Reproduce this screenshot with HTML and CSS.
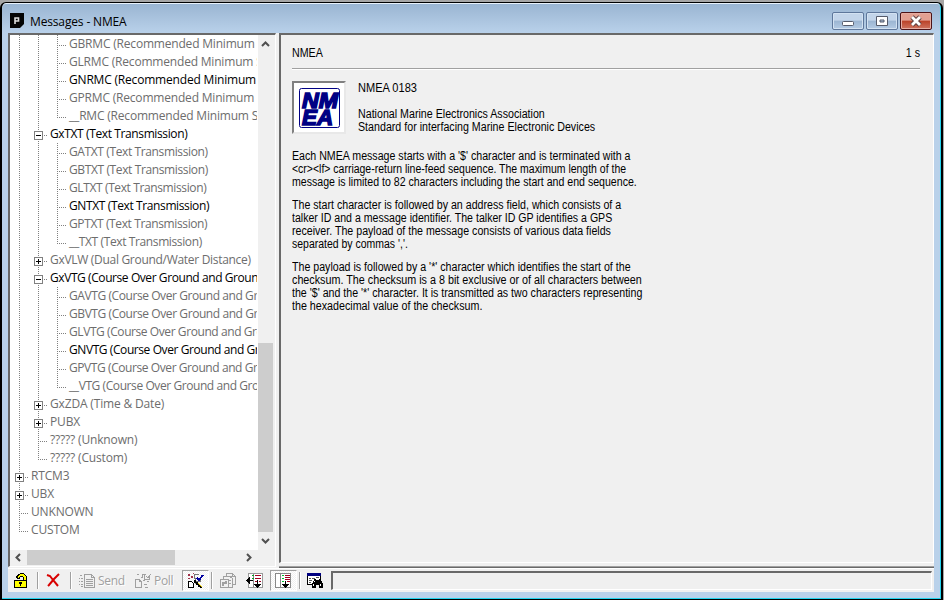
FILE: index.html
```html
<!DOCTYPE html>
<html lang="en">
<head>
<meta charset="utf-8">
<title>Messages - NMEA</title>
<link rel="stylesheet" href="styles.css">
</head>
<body>
<div class="window">
  <header class="titlebar">
    <svg class="app" width="14" height="15" viewBox="0 0 14 15"><path d="M0 0h14v11l-4 4H0z" fill="#050505"/><path d="M5 11V5h3.500v3H5" fill="none" stroke="#ddd" stroke-width="1.600"/></svg>
    <h1>Messages - NMEA</h1>
    <div class="controls">
      <button class="ctl"><svg width="12" height="12"><rect x=".5" y="6.500" width="11" height="4" rx="1" fill="#fff" stroke="#555b6b"/></svg></button>
      <button class="ctl"><svg width="12" height="12"><path fill-rule="evenodd" d="M.5 1.500h11v9H.5zM4 5v2h4V5z" fill="#fff" stroke="#555b6b"/></svg></button>
      <button class="ctl close"><svg width="14" height="12" viewBox="0 0 14 12"><path d="M3 2l8 8M11 2l-8 8" stroke="#5d4040" stroke-width="4.600"/><path d="M3 2l8 8M11 2l-8 8" stroke="#fff" stroke-width="2.800"/></svg></button>
    </div>
  </header>
  <div class="client">
    <div class="panes">
      <nav class="treepane">
        <ul class="tree">
          <li class="d3 rmc">GBRMC (Recommended Minimum Specific GNSS Data)</li>
          <li class="d3 rmc">GLRMC (Recommended Minimum Specific GNSS Data)</li>
          <li class="d3 rmc on">GNRMC (Recommended Minimum Specific GNSS Data)</li>
          <li class="d3 rmc">GPRMC (Recommended Minimum Specific GNSS Data)</li>
          <li class="d3 rmc last">__RMC (Recommended Minimum Specific GNSS Data)</li>
          <li class="d2 txt on minus">GxTXT (Text Transmission)</li>
          <li class="d3 txt">GATXT (Text Transmission)</li>
          <li class="d3 txt">GBTXT (Text Transmission)</li>
          <li class="d3 txt">GLTXT (Text Transmission)</li>
          <li class="d3 txt on">GNTXT (Text Transmission)</li>
          <li class="d3 txt">GPTXT (Text Transmission)</li>
          <li class="d3 txt last">__TXT (Text Transmission)</li>
          <li class="d2 vlw plus">GxVLW (Dual Ground/Water Distance)</li>
          <li class="d2 vtg on minus">GxVTG (Course Over Ground and Ground Speed)</li>
          <li class="d3 vtg">GAVTG (Course Over Ground and Ground Speed)</li>
          <li class="d3 vtg">GBVTG (Course Over Ground and Ground Speed)</li>
          <li class="d3 vtg">GLVTG (Course Over Ground and Ground Speed)</li>
          <li class="d3 vtg on">GNVTG (Course Over Ground and Ground Speed)</li>
          <li class="d3 vtg">GPVTG (Course Over Ground and Ground Speed)</li>
          <li class="d3 vtg last">__VTG (Course Over Ground and Ground Speed)</li>
          <li class="d2 plus">GxZDA (Time &amp; Date)</li>
          <li class="d2 plus">PUBX</li>
          <li class="d2">????? (Unknown)</li>
          <li class="d2 last">????? (Custom)</li>
          <li class="d1 plus">RTCM3</li>
          <li class="d1 plus">UBX</li>
          <li class="d1">UNKNOWN</li>
          <li class="d1 last">CUSTOM</li>
        </ul>
        <div class="vbar">
          <svg width="15" height="17"><path d="M4 11l3.500-3.500L11 11" class="arrow"/></svg>
          <div class="vthumb"></div>
          <svg width="15" height="18"><path d="M4 7l3.500 3.500L11 7" class="arrow"/></svg>
        </div>
        <div class="hbar">
          <svg width="17" height="15"><path d="M10 4L6.500 7.500 10 11" class="arrow"/></svg>
          <div class="hthumb"></div>
          <svg width="17" height="15"><path d="M6 4l3.500 3.500L6 11" class="arrow"/></svg>
        </div>
      </nav>
      <div class="side">
        <main class="detail">
          <div class="head"><span class="name">NMEA</span><span class="age">1 s</span></div>
          <div class="intro">
            <div class="logo"><svg width="50" height="49" viewBox="0 0 50 49">
              <rect x="5.500" y="5.500" width="40" height="39" rx="2" fill="none" stroke="#000084"/>
              <text x="8" y="24.500" textLength="36" lengthAdjust="spacingAndGlyphs">NM</text>
              <text x="8" y="41.500" textLength="31" lengthAdjust="spacingAndGlyphs">EA</text>
            </svg></div>
            <div class="about"><p class="a0">NMEA 0183</p><p class="a1">National Marine Electronics Association</p><p class="a2">Standard for interfacing Marine Electronic Devices</p></div>
          </div>
          <div class="copy">
            <p><span class="c1">Each NMEA message starts with a '$' character and is terminated with a</span><span class="c2">&lt;cr&gt;&lt;lf&gt; carriage-return line-feed sequence. The maximum length of the</span><span class="c3">message is limited to 82 characters including the start and end sequence.</span></p>
            <p><span class="c4">The start character is followed by an address field, which consists of a</span><span class="c5">talker ID and a message identifier. The talker ID GP identifies a GPS</span><span class="c6">receiver. The payload of the message consists of various data fields</span><span class="c7">separated by commas ','.</span></p>
            <p><span class="c8">The payload is followed by a '*' character which identifies the start of the</span><span class="c9">checksum. The checksum is a 8 bit exclusive or of all characters between</span><span class="c10">the '$' and the '*' character. It is transmitted as two characters representing</span><span class="c11">the hexadecimal value of the checksum.</span></p>
          </div>
        </main>
        <div class="edge"></div>
      </div>
    </div>
    <footer class="toolbar">
      <span class="tool lock"><svg width="14" height="16" shape-rendering="crispEdges"><path d="M3 5h2v1H3zM2 3h1v2H2zM3 2h1v1H3zM4 1h2v1H4zM6 0h4v1H6zM10 1h1v1h1v1h1v5h-4V4H6v2H3V3h1V2h2V1h4z" fill="#000"/><path d="M4 5V3h1V2h1V1h4v1h1v1h1v5h-2V4H9V3H6v1H5v1z" fill="#ff0"/><path d="M.5 7.500h12v7H.5z" fill="#ff0" stroke="#000"/><path d="M5 9h3v2H7v2H6v-2H5z" fill="#000"/></svg></span>
      <i class="sep"></i>
      <span class="tool del"><svg width="15" height="15"><path d="M1 2l3 1 3 4 5 6M13 1L8 6l-5 6-1 1" fill="none" stroke="#d80000" stroke-width="2"/></svg></span>
      <i class="sep"></i>
      <span class="tool send"><svg width="17" height="16" class="dim" shape-rendering="crispEdges"><path d="M5.500 1.500h7l3 3v10h-10zM12.500 1.500v3h3M7 6.500h7M7 8.500h7M7 10.500h7M7 12.500h7M1 2.500h2M0 5.500h1M2 5.500h2M0 8.500h1M2 8.500h2M0 11.500h1M2 11.500h2M2 13.500h2"/></svg><b>Send</b></span>
      <span class="tool poll"><svg width="17" height="16" class="dim" shape-rendering="crispEdges"><path d="M.5 6.500h4l2 2v6h-6zM4.500 6.500v2h2M2 1.500h2M6 4.500h2M7.500 1v4M8 1.500h3M9.500 2v4h5V4M11 3l2 2 3-4M8 7.500h2M12 8.500h2M9 11.500h3M10 14.500h3"/></svg><b>Poll</b></span>
      <span class="tool pressed magic"><svg width="17" height="16" shape-rendering="crispEdges"><path d="M1.500 8.500h3l2 2v4h-5z" fill="#fff" stroke="#000"/><path d="M7 4V1h4v1M7 4l2 3M9 8h4v-1M8 11l2-2" fill="none" stroke="#777"/><path d="M7 7h2v2h2v2h2v2h2v2h-2v-1h-2v-2H9v-2H7z" fill="#000"/><path d="M11 10h1v1h1v1h1v1h1v1h-1v-1h-1v-1h-1v-1h-1z" fill="#ffe000"/><path d="M10 5l2 2 4-5" fill="none" stroke="#0000a0" stroke-width="1.800"/><path d="M1 1h2v2H1zM4 3h2v2H4zM1 5h2v1H1zM6 0h1v1H6z" fill="#a03048"/></svg></span>
      <i class="sep"></i>
      <span class="tool copyi"><svg width="17" height="16" class="dim" shape-rendering="crispEdges"><path d="M6.500 3V.5h6l3 3v8H13M8 3.500h4M12.500 .5v3h3M3.500 6V3.500h6l3 2v9H9M.5 6.500h8v8h-8zM9 7.500h2M9 10.500h2"/><path d="M3 12.500V9.500h3M6 8v3" stroke-width="2"/></svg></span>
      <span class="tool cols"><svg width="17" height="16" shape-rendering="crispEdges"><path d="M2 .5h14v14H2z" fill="#fff" stroke="#999"/><path d="M7.500 1v13" stroke="#888"/><path d="M6 2.500h2M6 5.500h2" stroke="#00a020"/><path d="M9 2h6v1H9zM9 5h6v1H9zM9 8h2v1H9zM13 8h2v1h-2z" fill="#a00020"/><path d="M0 7h7v1H0zM1 6h1v3H1zM2 5h1v5H2zM3 4h1v7H3zM11 7h1v8h-1zM10 13h3v1h-3zM9 12h5v1H9zM8 11h7v1H8z" fill="#000"/></svg></span>
      <span class="tool pressed rows"><svg width="17" height="16" shape-rendering="crispEdges"><path d="M.5 .5h15v14H.5z" fill="#fff" stroke="#888"/><path d="M5.500 1v13" stroke="#888"/><path d="M7 2h2v1H7zM7 5h2v1H7zM7 8h2v1H7z" fill="#00c030"/><path d="M10 2h5v1h-5zM10 4h5v1h-5zM10 6h5v1h-5zM12 8h3v1h-3z" fill="#a00020"/><path d="M10 8h1v7h-1zM9 13h3v1H9zM8 12h5v1H8zM7 11h7v1H7z" fill="#000"/></svg></span>
      <i class="sep"></i>
      <span class="tool find"><svg width="18" height="16" shape-rendering="crispEdges"><path d="M.5 1.500h13v10H.5z" fill="#fff" stroke="#000"/><path d="M0 0h14v3H0z" fill="#000080"/><path d="M2 5.500h2M5 5.500h3M9 4.500h3M2 7.500h3M2 9.500h2" stroke="#555"/><path d="M7 6h2v1h3V6h2v2h1v2h1v5h-4v-3h-3v3H5v-5h1V8h1z" fill="#000"/><path d="M6 11h1v2H6zM13 11h1v2h-1zM7 8h1v1H7z" fill="#fff"/></svg></span>
      <div class="status"></div>
    </footer>
  </div>
</div>
</body>
</html>
```

FILE: styles.css
```css
* { box-sizing: border-box; }
body { margin: 0; width: 944px; height: 600px; overflow: hidden; background: #a6a6a6; padding: 2px 1px 0 0; }
.window {
  height: 598px; padding: 1px 7px 6px 6px;
  border: 1px solid #000; border-left-width: 2px; border-right-width: 2px;
  border-radius: 6px 6px 0 0;
  background: linear-gradient(#99b4d1, #b9d1ea 30px);
  box-shadow: inset -1px -1px #22d3ee, inset 0 1px #e8f1fa;
  font-family: "Open Sans", sans-serif;
}
.titlebar { height: 29px; display: flex; align-items: center; padding: 0 2px 0 2px; }
.app { margin-top: 4px; }
h1 { margin: 6px 0 0 6px; font: 12px/16px "Open Sans", sans-serif; letter-spacing: -.15px; flex: 1; }
.controls { display: flex; gap: 2px; margin-top: 5px; }
.ctl { width: 32px; height: 18px; padding: 0; border: 1px solid #5e779b; border-radius: 2px; background: linear-gradient(#c3d5ea 45%, #9bb5d2 50%, #b4cbe4); box-shadow: inset 0 0 0 1px #d3e2f2; display: flex; align-items: center; justify-content: center; }
.close { border-color: #4c1317; background: linear-gradient(#e2a092 45%, #bb4228 50%, #cf7460); box-shadow: inset 0 0 0 1px #e5ada2; }
.client { height: 559px; background: #f0f0f0; display: flex; flex-direction: column; }
.panes { height: 535px; display: flex; gap: 3px; }
.treepane {
  width: 268px; height: 534px; border: solid; border-width: 2px 1px 1px 2px; border-color: #696969 #fff #fff #696969;
  display: grid; grid-template: 515px 15px / 248px 15px; background: #f0f0f0;
}
.tree { margin: 0; padding: 0; list-style: none; background: #fff; border-right: 1px solid #fff; overflow: hidden; --v: repeating-linear-gradient(#808080 0 1px, transparent 1px 2px); --h: repeating-linear-gradient(90deg, #808080 0 1px, transparent 1px 2px); }
.tree li { height: 18px; font-size: 12px; line-height: 18px; color: #6d6d6d; white-space: nowrap; overflow: hidden; background-repeat: no-repeat; letter-spacing: -.16px; }
.tree .rmc { letter-spacing: -.19px; }
.tree .txt { letter-spacing: -.38px; }
.tree .vlw { letter-spacing: -.3px; }
.tree .vtg { letter-spacing: -.42px; }
.tree .on { color: #000; }
.d3 { padding-left: 59px; background-image: var(--v), var(--v), var(--v), var(--h); background-size: 1px 18px, 1px 18px, 1px 18px, 9px 1px; background-position: 9px 0, 28px 0, 47px 0, 47px 10px; }
.d3.last { background-size: 1px 18px, 1px 18px, 1px 10px, 9px 1px; }
.d2 { padding-left: 40px; background-image: var(--v), var(--v), var(--h); background-size: 1px 18px, 1px 18px, 9px 1px; background-position: 9px 0, 28px 0, 28px 10px; }
.d2.last { background-size: 1px 18px, 1px 10px, 9px 1px; }
.d1 { padding-left: 21px; background-image: var(--v), var(--h); background-size: 1px 18px, 9px 1px; background-position: 9px 0, 9px 10px; }
.d1.last { background-size: 1px 10px, 9px 1px; }
.plus::before, .minus::before {
  content: ""; box-sizing: border-box; float: left; width: 9px; height: 9px; margin: 6px 7px 0 -16px; border: 1px solid #808080;
  background: linear-gradient(#000, #000) 1px 3px / 5px 1px no-repeat #fff;
}
.plus::before { background: linear-gradient(#000, #000) 1px 3px / 5px 1px no-repeat, linear-gradient(#000, #000) 3px 1px / 1px 5px no-repeat #fff; }
.vbar { display: flex; flex-direction: column; }
.vthumb { height: 189px; margin-top: auto; background: #cdcdcd; }
.vbar svg, .hbar svg { flex: none; display: block; }
.hbar { display: flex; justify-content: flex-start; width: 248px; }
.hthumb { width: 148px; background: #cdcdcd; margin-right: auto; }
.arrow { fill: none; stroke: #505050; stroke-width: 2; }
.side { flex: 1; display: flex; flex-direction: column; gap: 3px; }
.edge { height: 2px; border-top: 1px solid #a0a0a0; background: #696969; }
.detail {
  height: 530px; border: solid; border-width: 2px 1px 1px 2px; border-color: #696969 #fff #fff #696969;
  padding: 0 13px 0 11px; font: 12px/13px "Liberation Sans", sans-serif; color: #000;
}
.head { height: 34px; padding-top: 12px; display: flex; justify-content: space-between; border-bottom: 1px solid #a0a0a0; box-shadow: 0 1px #fff; }
.name { transform: scaleX(.89); transform-origin: 0 0; }
.age { transform: scaleX(.89); transform-origin: 100% 0; }
.intro { display: flex; margin-top: 12px; gap: 12px; }
.logo { width: 54px; height: 53px; border: 2px solid; border-color: #808080 #e8e8e8 #e8e8e8 #808080; background: #fff; }
.logo svg { display: block; }
.logo text { font: italic bold 22px "Liberation Sans", sans-serif; fill: #000084; stroke: #000084; stroke-width: 1.5px; }
p { margin: 0; white-space: nowrap; }
.about { padding-top: 1px; }
.a0, .a1, .a2 { width: max-content; transform-origin: 0 0; transform: scaleX(.889); }
.a0 { margin-bottom: 13px; transform: scaleX(.92); }
.copy { margin-top: 16px; }
.copy p { margin-bottom: 10px; }
.copy span { display: block; width: max-content; transform-origin: 0 0; transform: scaleX(.886); }
.copy .c2 { transform: scaleX(.873); }
.copy .c3, .copy .c5 { transform: scaleX(.882); }
.copy .c7 { transform: scaleX(.873); }
.copy .c9 { transform: scaleX(.897); }
.copy .c11 { transform: scaleX(.892); }
.toolbar { height: 24px; padding: 0 2px 0 4px; display: flex; align-items: center; border-top: 1px solid #fff; font-size: 12px; }
.toolbar .tool { display: flex; align-items: center; height: 21px; flex: none; }
.toolbar b { font-weight: 400; color: #a0a0a0; text-shadow: 1px 1px #fff; margin-left: 2px; letter-spacing: -.3px; }
.sep { width: 1px; height: 17px; background: #a0a0a0; box-shadow: 1px 0 #fff; flex: none; }
.dim path { fill: none; stroke: #a0a0a0; }
.toolbar .lock { width: 25px; padding-left: 2px; }
.del { width: 32px; padding-left: 8px; }
.send { width: 56px; padding-left: 8px; }
.poll { width: 55px; padding-left: 8px; }
.pressed { width: 27px; justify-content: center; border: 1px solid; border-color: #a0a0a0 #fff #fff #a0a0a0; background: repeating-conic-gradient(#fff 0 25%, #f0f0f0 0 50%) 0 0 / 2px 2px; }
.magic { margin-right: 2px; }
.copyi { width: 34px; padding-left: 8px; }
.cols { width: 24px; }
.rows { margin-right: 2px; }
.find { width: 31px; padding-left: 7px; }
.status { flex: 1; height: 19px; border: solid; border-width: 2px 1px 1px 2px; border-color: #696969 #fff #fff #696969; }
```
